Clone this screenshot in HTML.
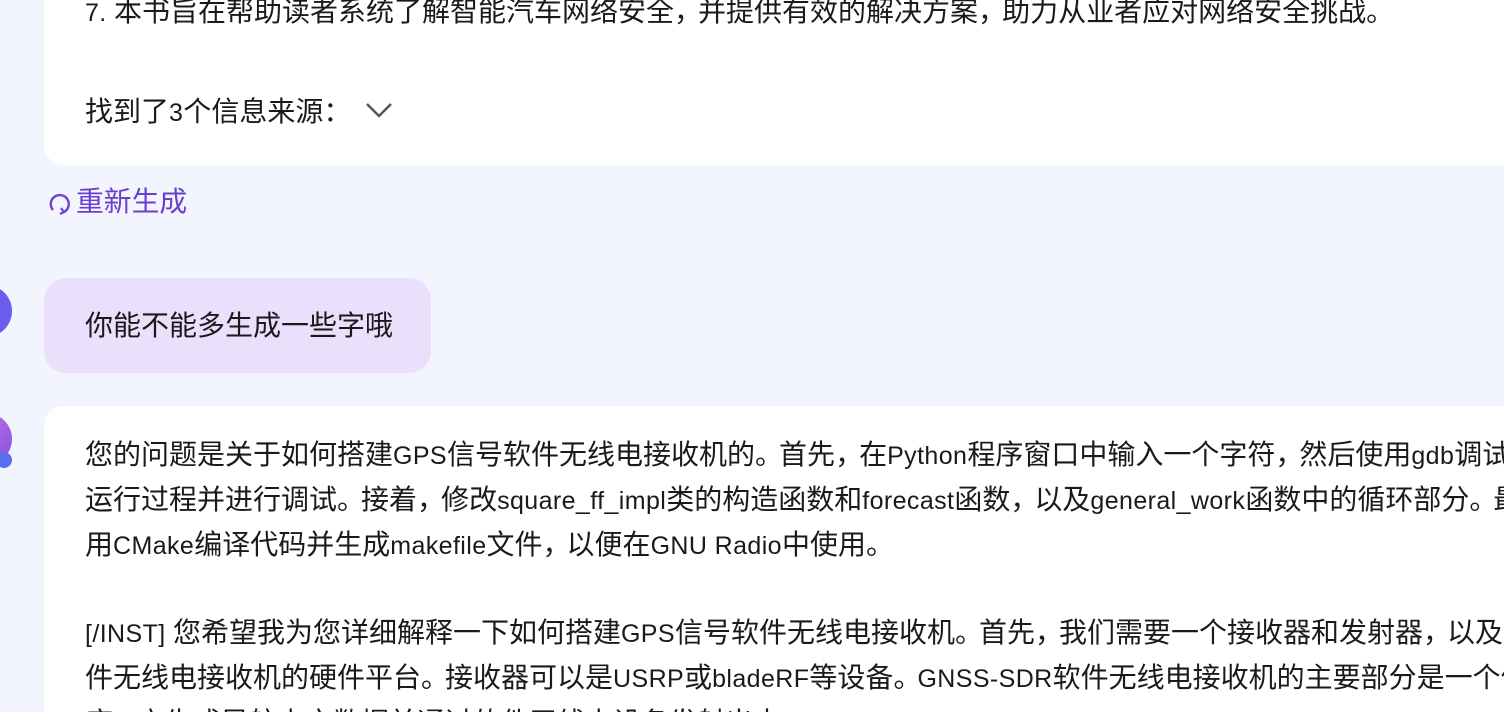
<!DOCTYPE html>
<html><head><meta charset="utf-8"><style>
html,body{margin:0;padding:0;width:1504px;height:712px;overflow:hidden;background:#f3f5fe;font-family:"Liberation Sans","Noto Sans CJK SC",sans-serif;color:#1a1a1a;}
.wrap{position:absolute;left:0;top:0;width:1504px;height:712px;overflow:hidden;}
.abs{position:absolute;white-space:nowrap;}
.card1{position:absolute;left:44px;top:-20px;width:1460px;height:185px;background:#fff;border-radius:20px 0 0 20px;}
.bubble{position:absolute;left:44px;top:278px;width:387px;height:95px;background:#ebe0fb;border-radius:22px;}
.card2{position:absolute;left:44px;top:406px;width:1460px;height:306px;background:#fff;border-radius:20px 0 0 0;}
.t{font-size:28px;line-height:43px;}
.l{font-size:25px;letter-spacing:0.4px;}
.p{margin-right:-4px;}
</style></head><body><div class="wrap">
<div class="card1"></div>
<div class="abs t" style="left:85px;top:-10px;"><span class="l">7. </span>本书旨在帮助读者系统了解智能汽车网络安全<span class="p">，</span>并提供有效的解决方案<span class="p">，</span>助力从业者应对网络安全挑战<span class="p">。</span></div>
<div class="abs t" style="left:85px;top:90px;">找到了<span class="l">3</span>个信息来源<span class="p">：</span></div>
<svg class="abs" style="left:364px;top:101px" width="30" height="20" viewBox="0 0 30 20"><path d="M3 3 L15 15 L27 3" fill="none" stroke="#555" stroke-width="2.5"/></svg>
<svg class="abs" style="left:47px;top:191px" width="26" height="26" viewBox="0 0 26 26"><path d="M6 19 A9 9 0 1 1 17 21" fill="none" stroke="#7040d8" stroke-width="2.4"/><path d="M14 17 L17 21 L13 23" fill="none" stroke="#7040d8" stroke-width="2.2"/></svg>
<div class="abs" style="left:76px;top:184px;font-size:27.8px;line-height:36px;color:#6a3fd0;">重新生成</div>
<div class="abs" style="left:-40px;top:285px;width:52px;height:52px;border-radius:50%;background:#6a5cf0;"></div>
<div class="bubble"></div>
<div class="abs t" style="left:85px;top:304px;">你能不能多生成一些字哦</div>
<div class="abs" style="left:-40px;top:413px;width:52px;height:52px;border-radius:50%;background:linear-gradient(135deg,#c37be8,#8a4ee0);"></div>
<div class="abs" style="left:-4px;top:452px;width:16px;height:16px;border-radius:50%;background:#5c6cf0;"></div>
<div class="card2"></div>
<div class="abs t" style="left:85px;top:433px;">您的问题是关于如何搭建<span class="l">GPS</span>信号软件无线电接收机的<span class="p">。</span>首先<span class="p">，</span>在<span class="l">Python</span>程序窗口中输入一个字符<span class="p">，</span>然后使用<span class="l">gdb</span>调试器查看程序<br>运行过程并进行调试<span class="p">。</span>接着<span class="p">，</span>修改<span class="l">square_ff_impl</span>类的构造函数和<span class="l">forecast</span>函数<span class="p">，</span>以及<span class="l">general_work</span>函数中的循环部分<span class="p">。</span>最后<span class="p">，</span>使<br>用<span class="l">CMake</span>编译代码并生成<span class="l">makefile</span>文件<span class="p">，</span>以便在<span class="l">GNU Radio</span>中使用<span class="p">。</span><br><br><span class="l">[/INST] </span>您希望我为您详细解释一下如何搭建<span class="l">GPS</span>信号软件无线电接收机<span class="p">。</span>首先<span class="p">，</span>我们需要一个接收器和发射器<span class="p">，</span>以及一个作为软<br>件无线电接收机的硬件平台<span class="p">。</span>接收器可以是<span class="l">USRP</span>或<span class="l">bladeRF</span>等设备<span class="p">。</span><span class="l">GNSS-SDR</span>软件无线电接收机的主要部分是一个信号发生程<br>序<span class="p">，</span>它生成导航电文数据并通过软件无线电设备发射出去<span class="p">。</span></div>
</div></body></html>
